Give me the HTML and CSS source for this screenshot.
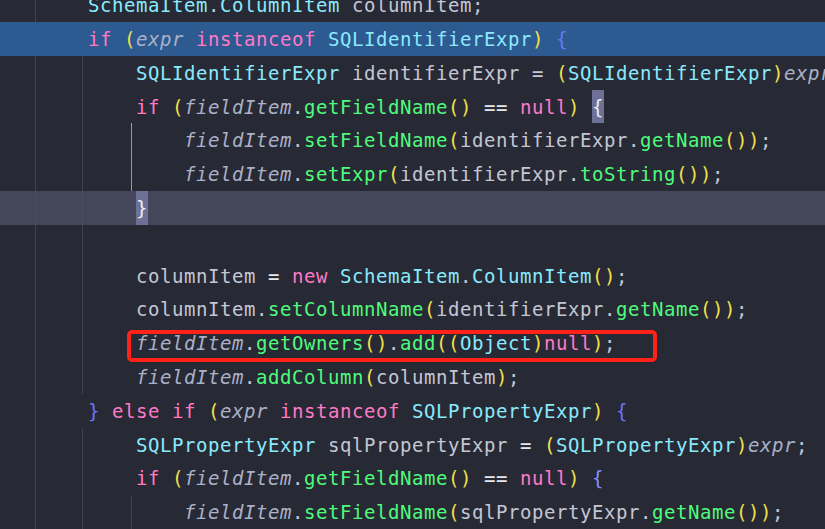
FILE: index.html
```html
<!DOCTYPE html>
<html lang="en">
<head>
    <meta charset="UTF-8">
    <meta name="viewport" content="width=device-width, initial-scale=1.0">
    <title>Editor</title>
    <link rel="stylesheet" href="styles.css">
</head>
<body>

<div class="editor">
    <div class="guide guide-outer"></div>
    <div class="guide guide-if-1"></div>
    <div class="guide guide-if-2"></div>
    <div class="guide guide-inner-active"></div>
    <div class="guide guide-inner-2"></div>

    <div class="line">    <span class="cls">SchemaItem</span>.<span class="cls">ColumnItem</span> columnItem;</div>
    <div class="line line-selected">    <span class="kw">if</span> <span class="p">(</span><span class="v">expr</span> <span class="kw">instanceof</span> <span class="cls">SQLIdentifierExpr</span><span class="p">)</span> <span class="br">{</span></div>
    <div class="line">        <span class="cls">SQLIdentifierExpr</span> identifierExpr = <span class="p">(</span><span class="cls">SQLIdentifierExpr</span><span class="p">)</span><span class="v">expr</span>;</div>
    <div class="line">        <span class="kw">if</span> <span class="p">(</span><span class="v">fieldItem</span>.<span class="fn">getFieldName</span><span class="p">()</span> <span class="op">==</span> <span class="kw">null</span><span class="p">)</span> <span class="match">{</span></div>
    <div class="line">            <span class="v">fieldItem</span>.<span class="fn">setFieldName</span><span class="p">(</span>identifierExpr.<span class="fn">getName</span><span class="p">())</span>;</div>
    <div class="line">            <span class="v">fieldItem</span>.<span class="fn">setExpr</span><span class="p">(</span>identifierExpr.<span class="fn">toString</span><span class="p">())</span>;</div>
    <div class="line line-caret">        <span class="match">}</span></div>
    <div class="line"> </div>
    <div class="line">        columnItem <span class="op">=</span> <span class="kw">new</span> <span class="cls">SchemaItem</span>.<span class="cls">ColumnItem</span><span class="p">()</span>;</div>
    <div class="line">        columnItem.<span class="fn">setColumnName</span><span class="p">(</span>identifierExpr.<span class="fn">getName</span><span class="p">())</span>;</div>
    <div class="line">        <span class="v">fieldItem</span>.<span class="fn">getOwners</span><span class="p">()</span>.<span class="fn">add</span><span class="p">((</span><span class="cls">Object</span><span class="p">)</span><span class="kw">null</span><span class="p">)</span>;<div class="mark"></div></div>
    <div class="line">        <span class="v">fieldItem</span>.<span class="fn">addColumn</span><span class="p">(</span>columnItem<span class="p">)</span>;</div>
    <div class="line">    <span class="br">}</span> <span class="kw">else if</span> <span class="p">(</span><span class="v">expr</span> <span class="kw">instanceof</span> <span class="cls">SQLPropertyExpr</span><span class="p">)</span> <span class="br">{</span></div>
    <div class="line">        <span class="cls">SQLPropertyExpr</span> sqlPropertyExpr <span class="op">=</span> <span class="p">(</span><span class="cls">SQLPropertyExpr</span><span class="p">)</span><span class="v">expr</span>;</div>
    <div class="line">        <span class="kw">if</span> <span class="p">(</span><span class="v">fieldItem</span>.<span class="fn">getFieldName</span><span class="p">()</span> <span class="op">==</span> <span class="kw">null</span><span class="p">)</span> <span class="br br-light">{</span></div>
    <div class="line">            <span class="v">fieldItem</span>.<span class="fn">setFieldName</span><span class="p">(</span>sqlPropertyExpr.<span class="fn">getName</span><span class="p">())</span>;</div>
</div>

</body>
</html>
```

FILE: styles.css
```css
body {
    margin: 0;
    height: 529px;
    overflow: hidden;
    background-color: #272935;
    font-family: "DejaVu Sans Mono", "Liberation Mono", monospace;
    font-size: 19px;
    letter-spacing: 0.56px;
    color: #c3c6d4;
}

.editor {
    position: relative;
    margin-top: -11.8px;
}

.line {
    position: relative;
    height: 33.8px;
    line-height: 35px;
    padding-left: 40px;
    white-space: pre;
    overflow: visible;
}

.line-selected {
    background-color: #2c5a91;
}

.line-caret {
    background-color: #44475a;
}

/* indent guides */
.guide {
    position: absolute;
    width: 1px;
    background-color: rgba(78, 81, 100, 0.6);
    z-index: 1;
}

.guide-outer {
    left: 35px;
    top: 0;
    height: 560px;
}

.guide-if-1 {
    left: 82px;
    top: 67.6px;
    height: 338px;
}

.guide-if-2 {
    left: 82px;
    top: 439.4px;
    height: 120px;
}

.guide-inner-active {
    left: 131px;
    top: 135.2px;
    height: 67.6px;
    background-color: #9398bd;
}

.guide-inner-2 {
    left: 131px;
    top: 507px;
    height: 60px;
}

/* syntax colours */
.kw {
    color: #ff79c6;
}

.cls {
    color: #8be9fd;
}

.fn {
    color: #50fa7b;
}

.p {
    color: #f3e04a;
}

.br {
    color: #6b78f5;
}

.br-light {
    color: #8590ff;
}

.v {
    font-style: italic;
    color: #aab1c8;
}

.op {
    color: #e6e8f0;
}

.match {
    display: inline-block;
    height: 33.8px;
    vertical-align: top;
    background-color: #6c7195;
    color: #eceef6;
}

/* annotation around the owners line */
.mark {
    position: absolute;
    left: 127px;
    top: 4px;
    width: 522px;
    height: 24px;
    border: 4px solid #ff2219;
    border-radius: 5px;
}
```
